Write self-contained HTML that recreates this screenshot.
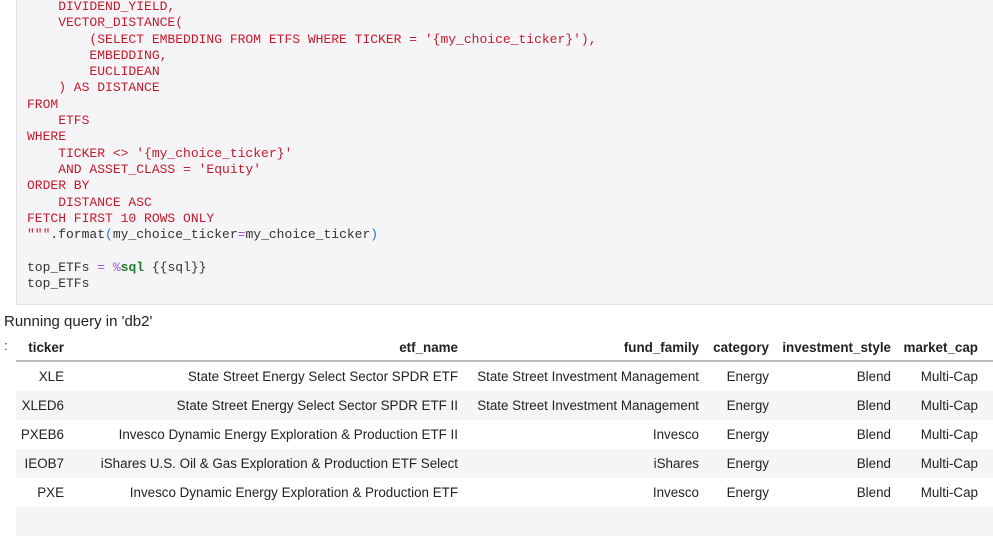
<!DOCTYPE html>
<html><head><style>
body{margin:0;width:993px;height:513px;overflow:hidden;background:#fff;position:relative;font-family:"Liberation Sans",sans-serif;}
.code{position:absolute;left:16px;top:-10px;width:990px;height:314px;background:#f5f4f7;border-left:1px solid #e0e0e0;border-bottom:1px solid #e0e0e0;}
pre{margin:0;position:absolute;left:27px;top:-1px;font-family:"Liberation Mono",monospace;font-size:13px;line-height:16.3px;color:#c6192b;}
.d{color:#333}.b{color:#2a6fd4}.p{color:#a04fd8}.g{color:#1c7d2a;font-weight:bold}
.run{position:absolute;left:4px;top:313px;font-size:15px;color:#222}
.c{position:absolute;left:4px;top:338px;font-size:13px;color:#333}
.row{position:absolute;left:16px;width:977px;height:29px;font-size:13.4px;color:#222}
.row span{position:absolute;top:7px;white-space:nowrap;text-align:right}
.h span{font-weight:bold}
.s{background:#f5f4f7}
</style></head><body>
<div class="code"></div>
<pre>    DIVIDEND_YIELD,
    VECTOR_DISTANCE(
        (SELECT EMBEDDING FROM ETFS WHERE TICKER = '{my_choice_ticker}'),
        EMBEDDING,
        EUCLIDEAN
    ) AS DISTANCE
FROM
    ETFS
WHERE
    TICKER &lt;&gt; '{my_choice_ticker}'
    AND ASSET_CLASS = 'Equity'
ORDER BY
    DISTANCE ASC
FETCH FIRST 10 ROWS ONLY
"""<span class="d">.format</span><span class="b">(</span><span class="d">my_choice_ticker</span><span class="p">=</span><span class="d">my_choice_ticker</span><span class="b">)</span>

<span class="d">top_ETFs </span><span class="p">=</span> <span class="p">%</span><span class="g">sql</span><span class="d"> {{sql}}
top_ETFs</span></pre>
<div class="run">Running query in 'db2'</div>
<div class="c">:</div>
<div class="row h" style="top:333px;border-bottom:2px solid #bdbdbd;height:27px">
<span style="right:929px">ticker</span><span style="right:535px">etf_name</span><span style="right:294px">fund_family</span><span style="right:224px">category</span><span style="right:102px">investment_style</span><span style="right:15px">market_cap</span></div>
<div class="row" style="top:362px"><span style="right:929px">XLE</span><span style="right:535px">State Street Energy Select Sector SPDR ETF</span><span style="right:294px">State Street Investment Management</span><span style="right:224px">Energy</span><span style="right:102px">Blend</span><span style="right:15px">Multi-Cap</span></div>
<div class="row s" style="top:391px"><span style="right:929px">XLED6</span><span style="right:535px">State Street Energy Select Sector SPDR ETF II</span><span style="right:294px">State Street Investment Management</span><span style="right:224px">Energy</span><span style="right:102px">Blend</span><span style="right:15px">Multi-Cap</span></div>
<div class="row" style="top:420px"><span style="right:929px">PXEB6</span><span style="right:535px">Invesco Dynamic Energy Exploration &amp; Production ETF II</span><span style="right:294px">Invesco</span><span style="right:224px">Energy</span><span style="right:102px">Blend</span><span style="right:15px">Multi-Cap</span></div>
<div class="row s" style="top:449px"><span style="right:929px">IEOB7</span><span style="right:535px">iShares U.S. Oil &amp; Gas Exploration &amp; Production ETF Select</span><span style="right:294px">iShares</span><span style="right:224px">Energy</span><span style="right:102px">Blend</span><span style="right:15px">Multi-Cap</span></div>
<div class="row" style="top:478px"><span style="right:929px">PXE</span><span style="right:535px">Invesco Dynamic Energy Exploration &amp; Production ETF</span><span style="right:294px">Invesco</span><span style="right:224px">Energy</span><span style="right:102px">Blend</span><span style="right:15px">Multi-Cap</span></div>
<div class="row s" style="top:507px"></div>
</body></html>
